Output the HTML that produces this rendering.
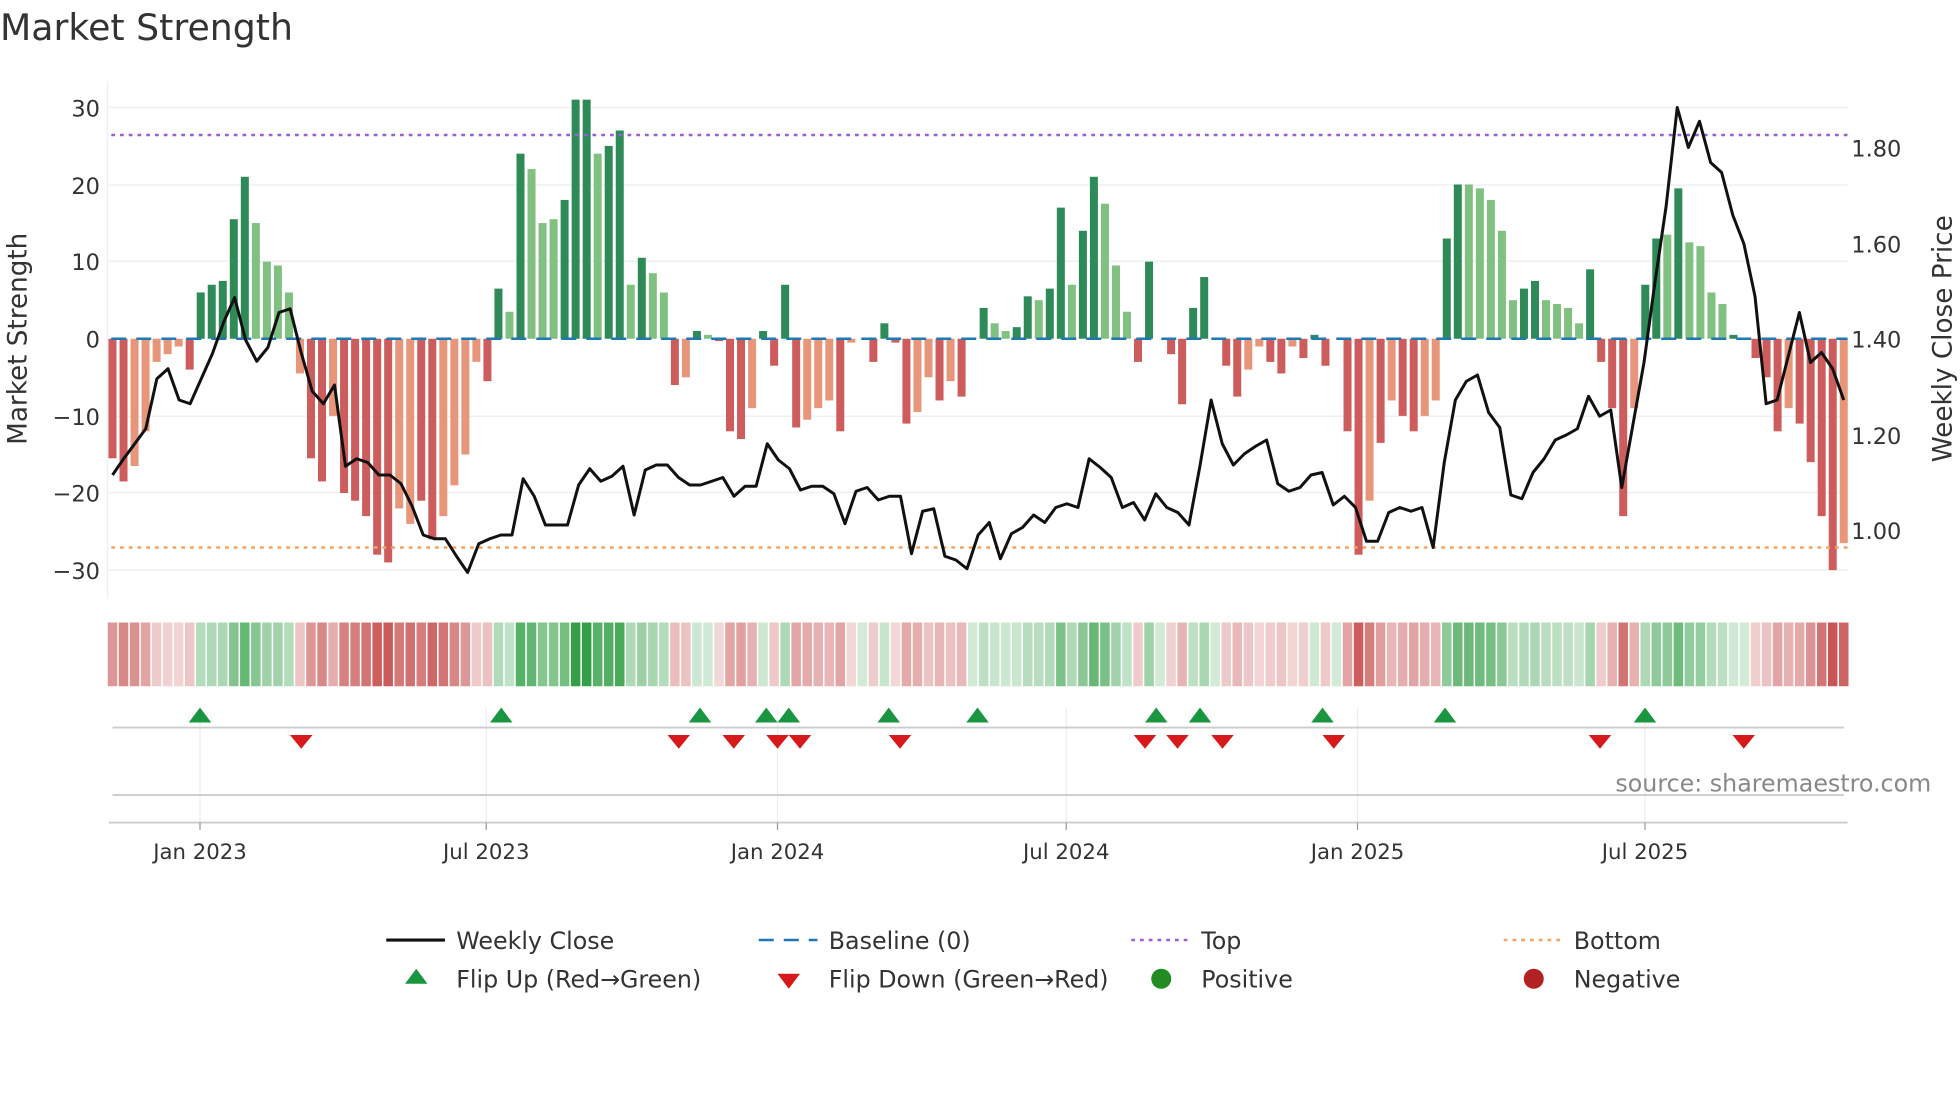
<!DOCTYPE html>
<html><head><meta charset="utf-8"><style>
html,body{margin:0;padding:0;background:#fff;}
svg{display:block;font-family:"DejaVu Sans","Liberation Sans",sans-serif;}
</style></head><body>
<svg id="s" width="1960" height="1102" viewBox="0 0 1568 881.6" xmlns="http://www.w3.org/2000/svg">
<rect width="1568" height="882" fill="#fff"/>
<text x="0" y="32" font-size="29" fill="#333">Market Strength</text>
<g id="grid" stroke="#eef0f4" stroke-width="1.2">
<line x1="87" x2="1478" y1="86" y2="86"/><line x1="87" x2="1478" y1="148" y2="148"/>
<line x1="87" x2="1478" y1="209" y2="209"/><line x1="87" x2="1478" y1="333" y2="333"/>
<line x1="87" x2="1478" y1="394" y2="394"/><line x1="87" x2="1478" y1="456" y2="456"/>
<line x1="86" x2="86" y1="65" y2="478"/>
</g>
<g font-size="18" fill="#333" text-anchor="end">
<text x="80" y="93">30</text><text x="80" y="155">20</text><text x="80" y="216">10</text>
<text x="80" y="278">0</text><text x="80" y="340">−10</text><text x="80" y="401">−20</text><text x="80" y="463">−30</text>
</g>
<g font-size="18" fill="#333">
<text x="1481" y="125">1.80</text><text x="1481" y="202">1.60</text><text x="1481" y="278">1.40</text>
<text x="1481" y="355">1.20</text><text x="1481" y="431">1.00</text>
</g>
<text transform="translate(21,271) rotate(-90)" font-size="21" fill="#333" text-anchor="middle">Market Strength</text>
<text transform="translate(1561,271) rotate(-90)" font-size="21" fill="#333" text-anchor="middle">Weekly Close Price</text>
<g id="bars"></g>
<line x1="89" x2="1478" y1="108" y2="108" stroke="#9b5fd6" stroke-width="2" stroke-dasharray="3,4"/>
<line x1="89" x2="1478" y1="438" y2="438" stroke="#f4a460" stroke-width="2" stroke-dasharray="3,4"/>
<line x1="89" x2="1478" y1="271" y2="271" stroke="#1f77b4" stroke-width="2" stroke-dasharray="12,8"/>
<polyline id="price" fill="none" stroke="#111" stroke-width="2.4" stroke-linejoin="round"/>
<g id="heat"></g>
<g stroke="#eceef2" stroke-width="1">
<line x1="160" x2="160" y1="566" y2="658"/><line x1="389" x2="389" y1="566" y2="658"/>
<line x1="622" x2="622" y1="566" y2="658"/><line x1="853" x2="853" y1="566" y2="658"/>
<line x1="1086" x2="1086" y1="566" y2="658"/><line x1="1316" x2="1316" y1="566" y2="658"/>
</g>
<line x1="90" x2="1475" y1="582" y2="582" stroke="#ccc" stroke-width="1.5"/>
<line x1="90" x2="1475" y1="636" y2="636" stroke="#ccc" stroke-width="1.5"/>
<line x1="87" x2="1478" y1="658" y2="658" stroke="#ccc" stroke-width="1.5"/>
<g id="marks"></g>
<text x="1545" y="633" font-size="19" fill="#888" text-anchor="end">source: sharemaestro.com</text>
<g font-size="17" fill="#333" text-anchor="middle">
<text x="160" y="687">Jan 2023</text><text x="389" y="687">Jul 2023</text><text x="622" y="687">Jan 2024</text>
<text x="853" y="687">Jul 2024</text><text x="1086" y="687">Jan 2025</text><text x="1316" y="687">Jul 2025</text>
</g>
<g stroke="#999" stroke-width="1">
<line x1="160" x2="160" y1="658" y2="664"/><line x1="389" x2="389" y1="658" y2="664"/><line x1="622" x2="622" y1="658" y2="664"/>
<line x1="853" x2="853" y1="658" y2="664"/><line x1="1086" x2="1086" y1="658" y2="664"/><line x1="1316" x2="1316" y1="658" y2="664"/>
</g>
<g font-size="19" fill="#333">
<line x1="309" x2="356" y1="752" y2="752" stroke="#111" stroke-width="2.5"/><text x="365" y="759">Weekly Close</text>
<line x1="607" x2="654" y1="752" y2="752" stroke="#1f77b4" stroke-width="2" stroke-dasharray="12,8"/><text x="663" y="759">Baseline (0)</text>
<line x1="905" x2="952" y1="752" y2="752" stroke="#9b5fd6" stroke-width="2" stroke-dasharray="3,4"/><text x="961" y="759">Top</text>
<line x1="1203" x2="1250" y1="752" y2="752" stroke="#f4a460" stroke-width="2" stroke-dasharray="3,4"/><text x="1259" y="759">Bottom</text>
<polygon points="333,775 342,787 324,787" fill="#1a9641"/><text x="365" y="790">Flip Up (Red→Green)</text>
<polygon points="622,779 640,779 631,791" fill="#d7191c"/><text x="663" y="790">Flip Down (Green→Red)</text>
<circle cx="929" cy="783" r="8" fill="#228b22"/><text x="961" y="790">Positive</text>
<circle cx="1227" cy="783" r="8" fill="#b22222"/><text x="1259" y="790">Negative</text>
</g>
</svg>
<script>
var d=[[-15.5,0],[-18.5,0],[-16.5,1],[-12,1],[-3,1],[-2,1],[-1,1],[-4,0],[6,0],[7,0],[7.5,0],[15.5,0],[21,0],[15,1],[10,1],[9.5,1],[6,1],[-4.5,1],[-15.5,0],[-18.5,0],[-10,1],[-20,0],[-21,0],[-23,0],[-28,0],[-29,0],[-22,1],[-24,1],[-21,0],[-26,0],[-23,1],[-19,1],[-15,1],[-3,1],[-5.5,0],[6.5,0],[3.5,1],[24,0],[22,1],[15,1],[15.5,1],[18,0],[31,0],[31,0],[24,1],[25,0],[27,0],[7,1],[10.5,0],[8.5,1],[6,1],[-6,0],[-5,1],[1,0],[0.5,1],[-0.3,0],[-12,0],[-13,0],[-9,1],[1,0],[-3.5,0],[7,0],[-11.5,0],[-10.5,1],[-9,1],[-8,1],[-12,0],[-0.5,1],[0,0],[-3,0],[2,0],[-0.5,0],[-11,0],[-9.5,1],[-5,1],[-8,0],[-5.5,1],[-7.5,0],[0,0],[4,0],[2,1],[1,1],[1.5,0],[5.5,0],[5,1],[6.5,0],[17,0],[7,1],[14,0],[21,0],[17.5,1],[9.5,1],[3.5,1],[-3,0],[10,0],[0,0],[-2,0],[-8.5,0],[4,0],[8,0],[0,0],[-3.5,0],[-7.5,0],[-4,1],[-1,1],[-3,0],[-4.5,0],[-1,1],[-2.5,0],[0.5,0],[-3.5,0],[0,0],[-12,0],[-28,0],[-21,1],[-13.5,0],[-8,1],[-10,0],[-12,0],[-10,1],[-8,1],[13,0],[20,0],[20,1],[19.5,1],[18,1],[14,1],[5,1],[6.5,0],[7.5,0],[5,1],[4.5,1],[4,1],[2,1],[9,0],[-3,0],[-9,0],[-23,0],[-9,1],[7,0],[13,0],[13.5,1],[19.5,0],[12.5,1],[12,1],[6,1],[4.5,1],[0.5,0],[0,0],[-2.5,0],[-5,0],[-12,0],[-9,1],[-11,0],[-16,0],[-23,0],[-30,0],[-26.5,1]];
var n=d.length,x0=90,dx=(1475-90)/(n-1),B=document.getElementById('bars'),H=document.getElementById('heat'),s='',h='';
for(var i=0;i<n;i++){var v=d[i][0],L=d[i][1],x=x0+i*dx,y0=271,len=Math.abs(v)*6.17;
var c=v>=0?(L?'#80c080':'#2e8b57'):(L?'#e8967a':'#cd5c5c');
if(len>0.5)s+='<rect x="'+(x-3.2)+'" y="'+(v>=0?y0-len:y0)+'" width="6.4" height="'+len+'" fill="'+c+'"/>';
var a=Math.min(1,0.22+Math.abs(v)/30*0.75);var hc=v>=0?'rgba(50,160,70,'+a+')':'rgba(200,80,80,'+a+')';
h+='<rect x="'+(x-3.8)+'" y="498" width="7.6" height="51" fill="'+hc+'"/>';}
B.innerHTML=s;H.innerHTML=h;
var p=[380,367,355,343,303,295,320,323,303,283,258,238,272,289,278,250,247,282,313,323,308,373,367,370,380,380,387,405,428,431,431,445,458,435,431,428,428,383,397,420,420,420,388,375,385,381,373,412,376,372,372,382,388,388,385,382,397,389,389,355,368,375,392,389,389,395,419,393,390,400,397,397,443,409,407,445,448,455,428,418,447,427,422,412,418,406,403,406,367,374,382,406,402,416,395,406,410,420,372,320,355,372,363,357,352,387,393,390,380,378,404,397,406,433,433,410,406,409,406,438,370,320,305,300,330,342,396,399,378,367,352,348,343,317,333,328,390,340,290,225,165,86,118,97,130,138,172,195,237,323,320,285,250,290,282,295,320];
var pts='',m=p.length,pdx=(1475-90)/(m-1);for(var j=0;j<m;j++)pts+=(90+j*pdx).toFixed(1)+','+p[j]+' ';
document.getElementById('price').setAttribute('points',pts);
var up=[160,401,560,613,631,711,782,925,960,1058,1156,1316],dn=[241,543,587,622,640,720,916,942,978,1067,1280,1395],mk='';
up.forEach(function(x){mk+='<polygon points="'+x+',566 '+(x+9)+',578 '+(x-9)+',578" fill="#1a9641"/>';});
dn.forEach(function(x){mk+='<polygon points="'+(x-9)+',588 '+(x+9)+',588 '+x+',599" fill="#d7191c"/>';});
document.getElementById('marks').innerHTML=mk;
</script>
</body></html>
